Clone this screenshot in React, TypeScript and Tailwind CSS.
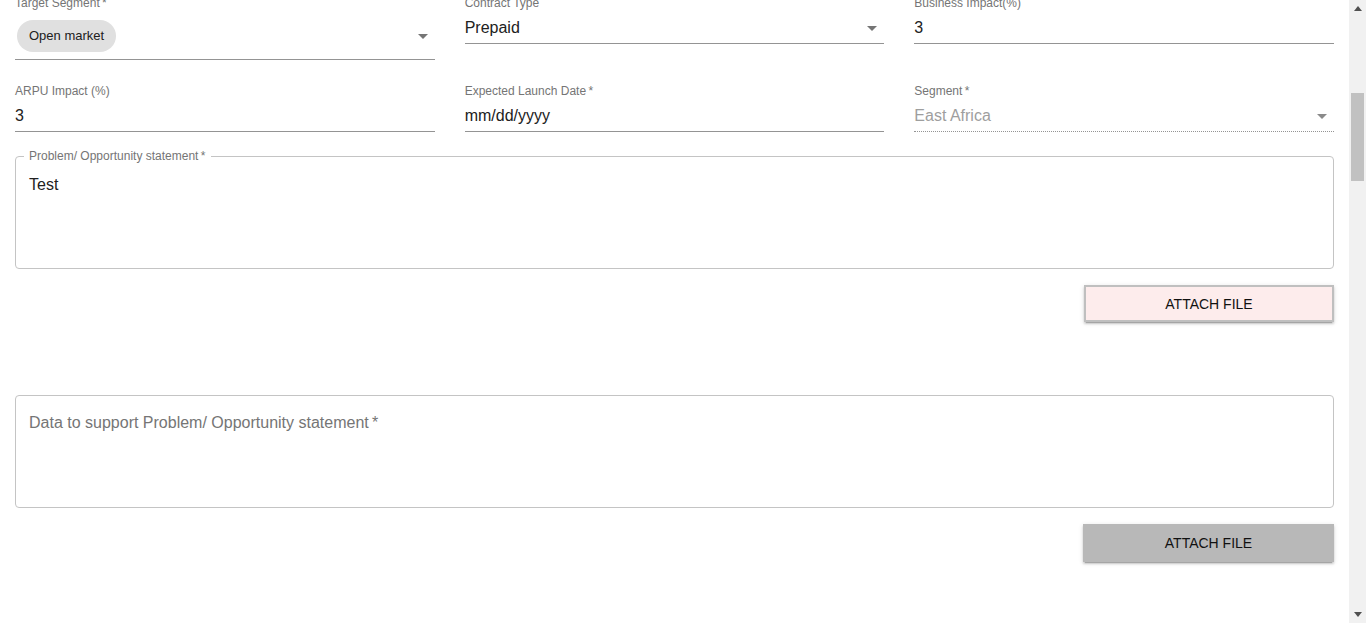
import React from "react";

const font = { fontFamily: '"Liberation Sans", Arial, Helvetica, sans-serif' };

function Arrow({ dim = false }: { dim?: boolean }) {
  return (
    <svg width="24" height="24" viewBox="0 0 24 24" className="shrink-0">
      <path d="M7 10l5 5 5-5z" fill={dim ? "#8a8a8a" : "#757575"} />
    </svg>
  );
}

function Label({ children }: { children: React.ReactNode }) {
  return <div className="h-4 text-[12px] leading-[15px] text-[#757575] whitespace-nowrap">{children}</div>;
}

function TextField({ label, value, select, disabled }: { label: string; value: string; select?: boolean; disabled?: boolean }) {
  return (
    <div className="flex flex-col">
      <Label>{label}</Label>
      <div
        className={`h-[32px] flex items-center justify-between border-b border-[#949494] ${disabled ? "border-dotted" : ""}`}
      >
        <span className={`text-[16px] leading-[19px] ${disabled ? "text-[#9e9e9e]" : "text-[#212121]"}`}>{value}</span>
        {select && <Arrow dim={disabled} />}
      </div>
    </div>
  );
}

export default function App() {
  return (
    <div className="flex w-[1366px] h-[623px] overflow-hidden bg-white" style={font}>
      <div className="flex-1 px-[15px]">
        <div className="-mt-1 grid grid-cols-3 gap-x-[30px] gap-y-[24px] items-start">
          <div className="flex flex-col">
            <Label>Target Segment{"\u2009*"}</Label>
            <div className="h-[48px] flex items-start justify-between border-b border-[#949494] pt-[8px]">
              <span className="ml-[2px] h-[32px] px-[12px] rounded-full bg-[#e0e0e0] flex items-center text-[13px] text-[#212121]">
                Open market
              </span>
              <div className="mt-[4px]">
                <Arrow />
              </div>
            </div>
          </div>
          <TextField label="Contract Type" value="Prepaid" select />
          <TextField label="Business Impact(%)" value="3" />
          <TextField label="ARPU Impact (%)" value="3" />
          <TextField label={"Expected Launch Date\u2009*"} value="mm/dd/yyyy" />
          <TextField label={"Segment\u2009*"} value="East Africa" select disabled />
        </div>

        <div className="relative mt-[24px] h-[113px] rounded-[4px] border border-[#c4c4c4] px-[13px] pt-[18px]">
          <span className="absolute -top-[9px] left-[8px] bg-white px-[5px] text-[12px] leading-4 text-[#757575]">
            Problem/ Opportunity statement{"\u2009*"}
          </span>
          <div className="text-[16px] leading-[19px] text-[#212121]">Test</div>
        </div>

        <div className="flex justify-end mt-[16px]">
          <button className="w-[250px] h-[37px] pt-[1px] border-2 border-[#bfbfbf] bg-[#fdecec] text-[14px] uppercase text-[#111] shadow-[0px_3px_1px_-2px_rgba(0,0,0,0.2),0px_2px_2px_0px_rgba(0,0,0,0.14),0px_1px_5px_0px_rgba(0,0,0,0.12)]">
            Attach File
          </button>
        </div>

        <div className="mt-[73px] h-[113px] rounded-[4px] border border-[#c4c4c4] px-[13px] pt-[17px]">
          <div className="text-[16px] leading-[19px] text-[#757575]">Data to support Problem/ Opportunity statement{"\u2009*"}</div>
        </div>

        <div className="flex justify-end mt-[16px]">
          <button className="w-[251px] h-[38px] bg-[#b8b8b8] text-[14px] uppercase text-[#111] shadow-[0px_3px_1px_-2px_rgba(0,0,0,0.2),0px_2px_2px_0px_rgba(0,0,0,0.14),0px_1px_5px_0px_rgba(0,0,0,0.12)]">
            Attach File
          </button>
        </div>
      </div>

      <div className="w-[17px] h-full bg-[#f1f1f1] flex flex-col items-center">
        <div className="h-[17px] flex items-center justify-center">
          <svg width="8" height="5" viewBox="0 0 8 5">
            <path d="M0 5L4 0L8 5z" fill="#505050" />
          </svg>
        </div>
        <div className="mt-[76px] w-[13px] h-[88px] bg-[#c1c1c1]" />
        <div className="flex-1" />
        <div className="h-[17px] flex items-center justify-center">
          <svg width="8" height="5" viewBox="0 0 8 5">
            <path d="M0 0L8 0L4 5z" fill="#505050" />
          </svg>
        </div>
      </div>
    </div>
  );
}
